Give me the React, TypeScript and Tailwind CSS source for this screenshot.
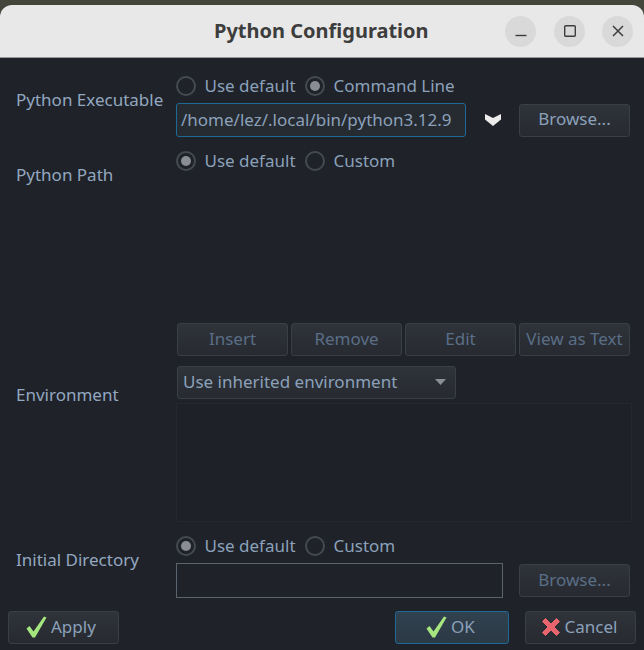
import React from "react";

function Radio({ on, label }: { on?: boolean; label: string }) {
  return (
    <div className="flex items-center h-[22px]">
      <span className="w-[20px] h-[20px] rounded-full border-2 border-[#454a52] flex items-center justify-center">
        {on && <span className="w-[10px] h-[10px] rounded-full bg-[#8a8d94]" />}
      </span>
      <span className="ml-[8.5px] text-[#8ba1ba]">{label}</span>
    </div>
  );
}

function Btn({ children, className = "", dim }: { children: React.ReactNode; className?: string; dim?: boolean }) {
  return (
    <div
      className={`h-[33px] shrink-0 pb-[2px] flex items-center justify-center rounded-[3px] border border-[#3a3e45] bg-gradient-to-b from-[#2f333a] to-[#272a30] ${dim ? "text-[#5a6e87]" : "text-[#8ba1ba]"} ${className}`}
    >
      {children}
    </div>
  );
}

function Check({ className = "" }: { className?: string }) {
  return (
    <svg width="21" height="22" viewBox="0 0 21 22" className={className}>
      <path d="M0.5 12.5 L3.5 10 L7.5 15.5 L18 0.5 L20.5 1.5 L9 21.5 L6.5 21.5 Z" fill="#a6e67f" />
    </svg>
  );
}

export default function App() {
  return (
    <div className="w-[644px] h-[650px] bg-[#1f2229] text-[17px] leading-[22px] text-[#8ba1ba] flex flex-col overflow-hidden" style={{ fontFamily: '"Noto Sans", sans-serif' }}>
      <div className="bg-[#44463c] h-[58px] shrink-0">
        <div className="mt-[5px] h-[53px] bg-[#e8e8e8] rounded-t-[12px] border-b border-[#9a9a9a] flex items-center pl-[214px] pr-[11px]">
          <span className="font-bold text-[#3d3d3d] text-[20px] w-[215px] whitespace-nowrap">Python Configuration</span>
          <div className="ml-auto flex">
            <span className="w-[31px] h-[31px] rounded-full bg-[#d9d9d9] flex items-center justify-center">
              <svg width="14" height="14" viewBox="0 0 14 14"><path d="M1.5 11.5h11" stroke="#3d3d3d" strokeWidth="1.4" /></svg>
            </span>
            <span className="ml-[18px] w-[31px] h-[31px] rounded-full bg-[#d9d9d9] flex items-center justify-center">
              <svg width="14" height="14" viewBox="0 0 14 14"><rect x="1.7" y="1.7" width="10.6" height="10.6" rx="1" fill="none" stroke="#3d3d3d" strokeWidth="1.4" /></svg>
            </span>
            <span className="ml-[17px] w-[31px] h-[31px] rounded-full bg-[#d9d9d9] flex items-center justify-center">
              <svg width="14" height="14" viewBox="0 0 14 14"><path d="M2 2l10 10M12 2L2 12" stroke="#3d3d3d" strokeWidth="1.5" /></svg>
            </span>
          </div>
        </div>
      </div>

      <div className="pl-[16px] pt-[17px] flex flex-col">
        {/* Python Executable */}
        <div className="flex h-[75px]">
          <div className="w-[160px] shrink-0 pt-[14px] text-[#93a8c0] whitespace-nowrap">Python Executable</div>
          <div className="flex-1">
            <div className="flex gap-[9.5px]">
              <Radio label="Use default" />
              <Radio on label="Command Line" />
            </div>
            <div className="mt-[6px] flex items-center">
              <div className="w-[290px] h-[34px] shrink-0 rounded-[3px] border border-[#1d6a96] bg-[#262a31] pl-[4px] flex items-center whitespace-nowrap text-[#8ba1ba]">/home/lez/.local/bin/python3.12.9</div>
              <svg width="18" height="14" viewBox="0 0 18 14" className="ml-[18px] shrink-0">
                <path d="M1 1 L9 5 L17 1 L17 6.5 L9 13 L1 6.5 Z" fill="#ececec" />
              </svg>
              <Btn className="w-[111px] ml-[17px]">Browse...</Btn>
            </div>
          </div>
        </div>

        {/* Python Path */}
        <div className="flex h-[206px]">
          <div className="w-[160px] shrink-0 pt-[14px] text-[#93a8c0]">Python Path</div>
          <div className="flex-1 flex flex-col">
            <div className="flex gap-[9.5px]">
              <Radio on label="Use default" />
              <Radio label="Custom" />
            </div>
            <div className="mt-auto flex gap-[3px] pl-[1px]">
              <Btn dim className="w-[111px]">Insert</Btn>
              <Btn dim className="w-[111px]">Remove</Btn>
              <Btn dim className="w-[111px]">Edit</Btn>
              <Btn dim className="w-[111px]">View as Text</Btn>
            </div>
          </div>
        </div>

        {/* Environment */}
        <div className="flex mt-[10px] h-[156px]">
          <div className="w-[160px] shrink-0 pt-[18px] text-[#93a8c0]">Environment</div>
          <div className="flex-1 flex flex-col">
            <div className="ml-[1px] w-[279px] h-[33px] pb-[2px] rounded-[3px] border border-[#3a3e45] bg-gradient-to-b from-[#2f333a] to-[#272a30] pl-[5px] pr-[9px] flex items-center">
              <span className="text-[#8ba1ba] whitespace-nowrap">Use inherited environment</span>
              <svg width="11" height="6" viewBox="0 0 11 6" className="ml-auto"><path d="M0 0h11L5.5 6z" fill="#8b8e94" /></svg>
            </div>
            <div className="mt-[4px] h-[119px] w-[456px] border border-[#25282e] bg-[#1e2127]" />
          </div>
        </div>

        {/* Initial Directory */}
        <div className="flex mt-[13px] h-[62px]">
          <div className="w-[160px] shrink-0 pt-[14px] text-[#93a8c0]">Initial Directory</div>
          <div className="flex-1">
            <div className="flex gap-[9.5px]">
              <Radio on label="Use default" />
              <Radio label="Custom" />
            </div>
            <div className="mt-[6px] flex items-center">
              <div className="w-[327px] h-[35px] shrink-0 border border-[#5b636e] bg-[#1f2229]" />
              <Btn dim className="w-[111px] ml-[16px]">Browse...</Btn>
            </div>
          </div>
        </div>
      </div>

      {/* Footer */}
      <div className="mt-[14px] px-[8px] flex">
        <Btn className="w-[111px] !justify-start pl-[17px]"><Check className="mr-[4px]" />Apply</Btn>
        <Btn className="w-[114px] ml-auto pr-[3px] !border-[#1d6a96] !from-[#32414f] !to-[#2b3945]"><Check className="mr-[4px]" />OK</Btn>
        <Btn className="w-[111px] ml-[16px] pr-[3px]">
          <svg width="20" height="20" viewBox="0 0 20 20" className="mr-[4px]">
            <path d="M1.5 4.5 L4.5 1.5 L10 7 L15.5 1.5 L18.5 4.5 L13 10 L18.5 15.5 L15.5 18.5 L10 13 L4.5 18.5 L1.5 15.5 L7 10 Z" fill="#e8656d" stroke="#e8656d" strokeWidth="1" strokeLinejoin="round" />
          </svg>
          Cancel
        </Btn>
      </div>
    </div>
  );
}
